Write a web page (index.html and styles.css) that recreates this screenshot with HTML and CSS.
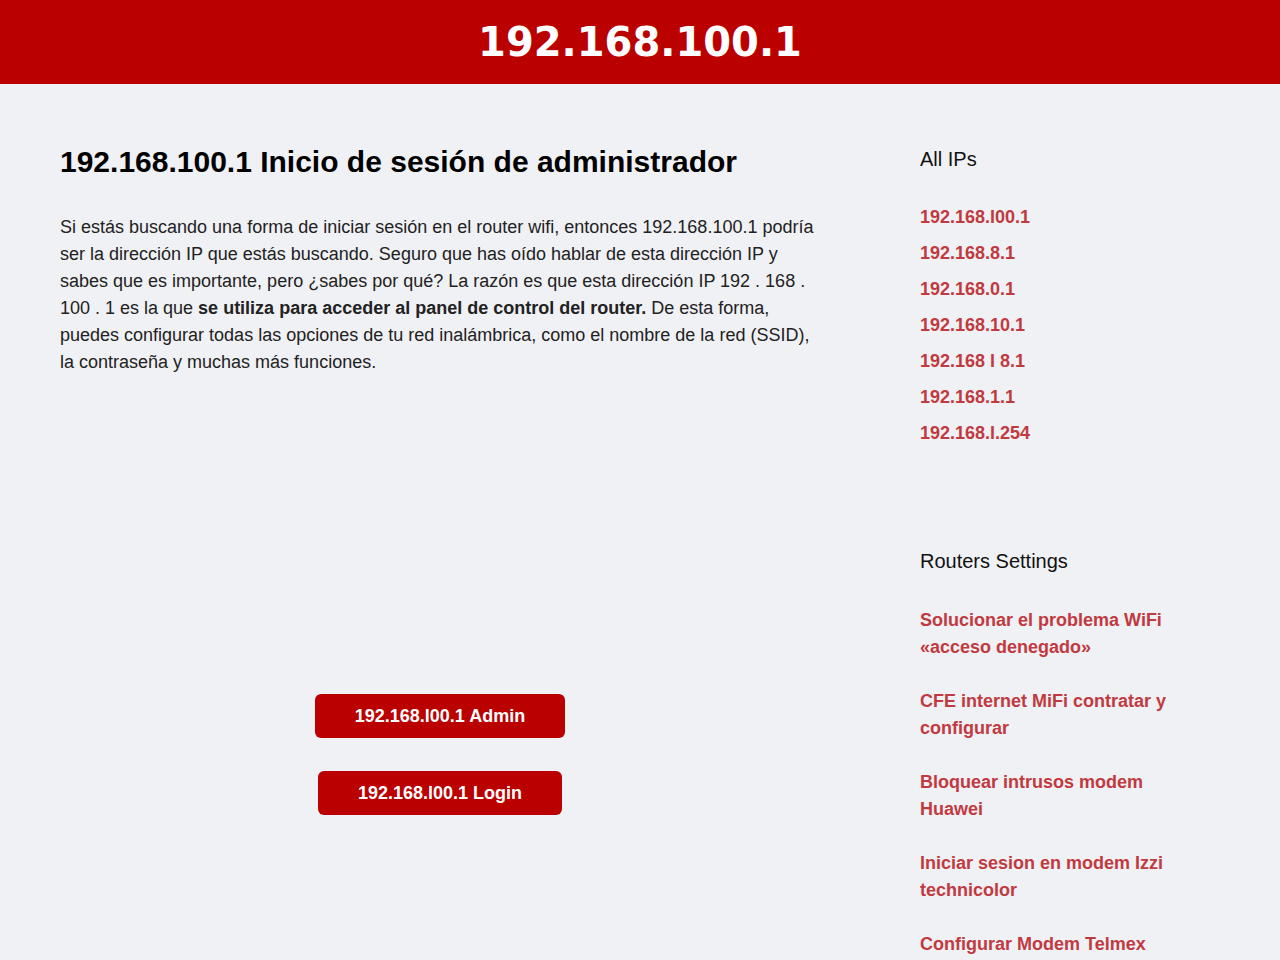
FILE: index.html
```html
<!DOCTYPE html>
<html lang="es">
<head>
<meta charset="utf-8">
<title>192.168.100.1</title>
<link rel="stylesheet" href="styles.css">
</head>
<body>
<header class="site-header">
  <div class="site-title">192.168.100.1</div>
</header>
<div class="layout">
  <main class="main">
    <h1 class="page-title">192.168.100.1 Inicio de sesión de administrador</h1>
    <p class="intro">Si estás buscando una forma de iniciar sesión en el router wifi, entonces 192.168.100.1 podría ser la dirección IP que estás buscando. Seguro que has oído hablar de esta dirección IP y sabes que es importante, pero ¿sabes por qué? La razón es que esta dirección IP 192 . 168 . 100 . 1 es la que <strong>se utiliza para acceder al panel de control del router.</strong> De esta forma, puedes configurar todas las opciones de tu red inalámbrica, como el nombre de la red (SSID), la contraseña y muchas más funciones.</p>
    <div class="buttons">
      <a class="btn btn-admin" href="#">192.168.l00.1 Admin</a>
      <a class="btn btn-login" href="#">192.168.l00.1 Login</a>
    </div>
  </main>
  <aside class="sidebar">
    <section class="widget">
      <h2 class="widget-title title-ips">All IPs</h2>
      <ul class="ip-list">
        <li><a href="#">192.168.l00.1</a></li>
        <li><a href="#">192.168.8.1</a></li>
        <li><a href="#">192.168.0.1</a></li>
        <li><a href="#">192.168.10.1</a></li>
        <li><a href="#">192.168 l 8.1</a></li>
        <li><a href="#">192.168.1.1</a></li>
        <li><a href="#">192.168.l.254</a></li>
      </ul>
    </section>
    <section class="widget widget-routers">
      <h2 class="widget-title title-routers">Routers Settings</h2>
      <ul class="post-list">
        <li><a href="#">Solucionar el problema WiFi «acceso denegado»</a></li>
        <li><a href="#">CFE internet MiFi contratar y configurar</a></li>
        <li><a href="#">Bloquear intrusos modem Huawei</a></li>
        <li><a href="#">Iniciar sesion en modem Izzi technicolor</a></li>
        <li><a href="#">Configurar Modem Telmex</a></li>
      </ul>
    </section>
  </aside>
</div>
</body>
</html>
```
FILE: styles.css
```css
html, body {
  margin: 0;
  padding: 0;
}
body {
  background: #f0f1f5;
  font-family: "Liberation Sans", Arial, sans-serif;
  color: #222;
}
.site-header {
  background: #bb0000;
  height: 84px;
  display: flex;
  align-items: center;
  justify-content: center;
}
.site-title {
  font-family: "DejaVu Sans", sans-serif;
  font-weight: bold;
  font-size: 40px;
  color: #fff;
}
.layout {
  display: flex;
  gap: 100px;
  padding: 0 60px;
  align-items: flex-start;
}
.main {
  width: 760px;
  flex: none;
  padding-top: 58px;
}
.page-title {
  font-size: 30px;
  line-height: 40px;
  font-weight: bold;
  color: #000;
  margin: 0 0 32px;
}
.intro {
  font-size: 18px;
  line-height: 27px;
  margin: 0;
}
.intro strong {
  font-weight: bold;
}
.buttons {
  margin-top: 318px;
  display: flex;
  flex-direction: column;
  align-items: center;
  gap: 33px;
}
.btn {
  display: inline-block;
  background: #bb0000;
  color: #fff;
  font-weight: bold;
  font-size: 18px;
  line-height: 44px;
  height: 44px;
  border-radius: 6px;
  text-decoration: none;
  text-align: center;
}
.btn-admin {
  width: 250px;
}
.btn-login {
  width: 244px;
}
.sidebar {
  width: 300px;
  flex: none;
  padding-top: 62px;
}
.widget-title {
  font-size: 20px;
  font-weight: normal;
  line-height: 26px;
  color: #111;
  margin: 0;
}
.title-ips {
  margin-bottom: 27px;
}
.title-routers {
  margin-bottom: 33px;
}
ul {
  list-style: none;
  margin: 0;
  padding: 0;
}
.ip-list li {
  line-height: 36px;
  font-size: 18px;
}
.sidebar a {
  color: #c13a40;
  font-weight: bold;
  text-decoration: none;
  font-size: 18px;
}
.widget-routers {
  margin-top: 97px;
}
.post-list {
  display: flex;
  flex-direction: column;
  gap: 27px;
}
.post-list li {
  line-height: 27px;
  font-size: 18px;
  width: 260px;
}
```
